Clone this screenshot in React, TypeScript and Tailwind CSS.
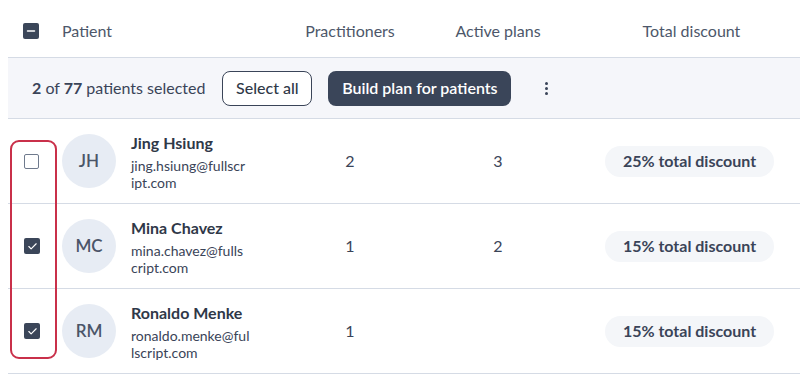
import { Check, Minus } from "lucide-react";

interface Patient {
  initials: string;
  name: string;
  email: [string, string];
  practitioners: number;
  plans?: number;
  discount: string;
  selected: boolean;
}

// email is split where the reference column wraps it
const patients: Patient[] = [
  {
    initials: "JH",
    name: "Jing Hsiung",
    email: ["jing.hsiung@fullscr", "ipt.com"],
    practitioners: 2,
    plans: 3,
    discount: "25% total discount",
    selected: false,
  },
  {
    initials: "MC",
    name: "Mina Chavez",
    email: ["mina.chavez@fulls", "cript.com"],
    practitioners: 1,
    plans: 2,
    discount: "15% total discount",
    selected: true,
  },
  {
    initials: "RM",
    name: "Ronaldo Menke",
    email: ["ronaldo.menke@ful", "lscript.com"],
    practitioners: 1,
    discount: "15% total discount",
    selected: true,
  },
];

const cols = "grid grid-cols-[54px_213px_150px_146px_1fr] items-center";

function Checkbox({ state }: { state: "on" | "off" | "mixed" }) {
  if (state === "off") {
    return <div className="w-[15px] h-[15px] rounded-[2px] border-[1.5px] border-[#6f7a8d] bg-white" />;
  }
  return (
    <div className="w-[16px] h-[16px] rounded-[2px] bg-[#3b4659] flex items-center justify-center">
      {state === "on" ? (
        <Check size={11} strokeWidth={2.5} className="text-white" />
      ) : (
        <Minus size={12} strokeWidth={3} className="text-white" />
      )}
    </div>
  );
}

export default function App() {
  return (
    <div
      className="relative w-[800px] h-[380px] bg-white overflow-hidden text-[#3a4458]"
      style={{ fontFamily: "Lato, 'Open Sans', sans-serif" }}
    >
      <div className="ml-2">
        {/* Header */}
        <div className={`${cols} h-[58px] pt-[4px] border-b border-[#d5dbe5] text-[16px] text-[#4d576a]`}>
          <div className="pl-[15px]">
            <Checkbox state="mixed" />
          </div>
          <div>Patient</div>
          <div className="text-center">Practitioners</div>
          <div className="text-center">Active plans</div>
          <div className="text-center pl-[12px]">Total discount</div>
        </div>

        {/* Selection bar */}
        <div className="h-[61px] bg-[#f5f6fa] border-b border-[#d5dbe5] flex items-center pl-6 text-[16px]">
          <span>
            <b className="font-bold">2</b> of <b className="font-bold">77</b> patients selected
          </span>
          <button className="ml-[17px] w-[90px] h-[35px] rounded-lg border border-[#3a4458] bg-white text-[16px] font-medium text-[#2f3848]">
            Select all
          </button>
          <button className="ml-4 w-[183px] h-[35px] rounded-lg bg-[#3a4559] text-[16px] font-semibold text-white">
            Build plan for patients
          </button>
          <div className="ml-[34px] flex flex-col gap-[2px]">
            <span className="w-[3px] h-[3px] rounded-full bg-[#3a4458]" />
            <span className="w-[3px] h-[3px] rounded-full bg-[#3a4458]" />
            <span className="w-[3px] h-[3px] rounded-full bg-[#3a4458]" />
          </div>
        </div>

        {/* Rows */}
        {patients.map((p) => (
          <div key={p.initials} className={`${cols} h-[85px] border-b border-[#d5dbe5] text-[16px]`}>
            <div className="pl-4">
              <Checkbox state={p.selected ? "on" : "off"} />
            </div>
            <div className="flex items-center gap-[15px]">
              <div className="w-[54px] h-[54px] shrink-0 rounded-full bg-[#e7ecf4] flex items-center justify-center text-[17px] font-semibold text-[#4b5568]">
                {p.initials}
              </div>
              <div className="pt-[2px]">
                <div className="font-bold text-[16px] text-[#2f3848] leading-[20px]">{p.name}</div>
                <div className="text-[14px] leading-[17px] mt-[4px] whitespace-nowrap">
                  <div>{p.email[0]}</div>
                  <div>{p.email[1]}</div>
                </div>
              </div>
            </div>
            <div className="text-center">{p.practitioners}</div>
            <div className="text-center">{p.plans ?? ""}</div>
            <div className="pl-[34px]">
              <span className="inline-flex items-center justify-center w-[169px] h-[31px] rounded-full bg-[#f4f6f9] font-bold text-[#3a4458]">
                {p.discount}
              </span>
            </div>
          </div>
        ))}
      </div>

      {/* Highlight annotation */}
      <div className="absolute left-[10px] top-[140px] w-[47px] h-[219px] rounded-[9px] border-2 border-[#c9304a]" />
    </div>
  );
}
